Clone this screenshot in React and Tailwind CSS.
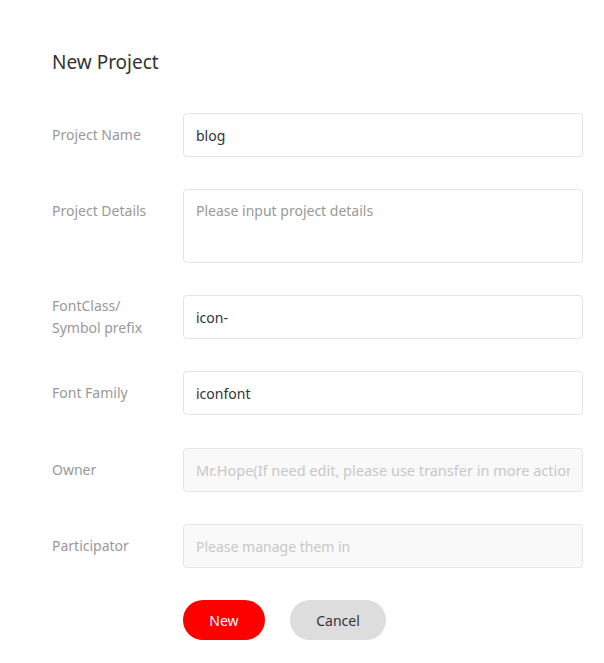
export default function App() {
  const font = { fontFamily: '"Noto Sans", "Liberation Sans", Arial, sans-serif' }

  const Row = ({ label, children }) => (
    <div className="flex items-start">
      <div className="w-[131px] h-[44px] flex items-center text-[14px] leading-[22px] text-[#999]">
        {label}
      </div>
      <div className="w-[400px]">{children}</div>
    </div>
  )

  const inputCls =
    "w-full h-[44px] px-[12px] border border-[#e5e5e5] rounded-[4px] text-[14px] text-[#333] outline-none placeholder:text-[#999]"

  return (
    <div className="bg-white min-h-[663px] pl-[52px] pt-[48px]" style={font}>
      <h1 className="text-[19px] leading-[28px] text-[#333] mb-[37px]">New Project</h1>
      <div className="flex flex-col gap-[32px]">
        <Row label="Project Name">
          <input className={inputCls} defaultValue="blog" />
        </Row>
        <Row label="Project Details">
          <textarea
            className="w-full h-[74px] block px-[12px] py-[10px] border border-[#e5e5e5] rounded-[4px] text-[14px] leading-[22px] text-[#333] outline-none resize-none placeholder:text-[#999]"
            placeholder="Please input project details"
          />
        </Row>
        <Row
          label={
            <span>
              FontClass/
              <br />
              Symbol prefix
            </span>
          }
        >
          <input className={inputCls} defaultValue="icon-" />
        </Row>
        <Row label="Font Family">
          <input className={inputCls} defaultValue="iconfont" />
        </Row>
        <div className="mt-px">
          <Row label="Owner">
            <input
              disabled
              className="w-full h-[44px] px-[12px] border border-[#e5e5e5] rounded-[4px] text-[14.5px] text-[#c8c8c8] bg-[#f9f9f9] outline-none"
              defaultValue="Mr.Hope(If need edit, please use transfer in more action)"
            />
          </Row>
        </div>
        <Row label="Participator">
          <input
            disabled
            className="w-full h-[44px] px-[12px] border border-[#e5e5e5] rounded-[4px] text-[14px] bg-[#f9f9f9] outline-none placeholder:text-[#c8c8c8]"
            placeholder="Please manage them in"
          />
        </Row>
      </div>
      <div className="flex gap-[25px] ml-[131px] mt-[32px]">
        <button className="w-[82px] h-[40px] rounded-full bg-[#ff0000] text-white text-[14px]">New</button>
        <button className="w-[96px] h-[40px] rounded-full bg-[#dddddd] text-[#333] text-[14px]">Cancel</button>
      </div>
    </div>
  )
}
